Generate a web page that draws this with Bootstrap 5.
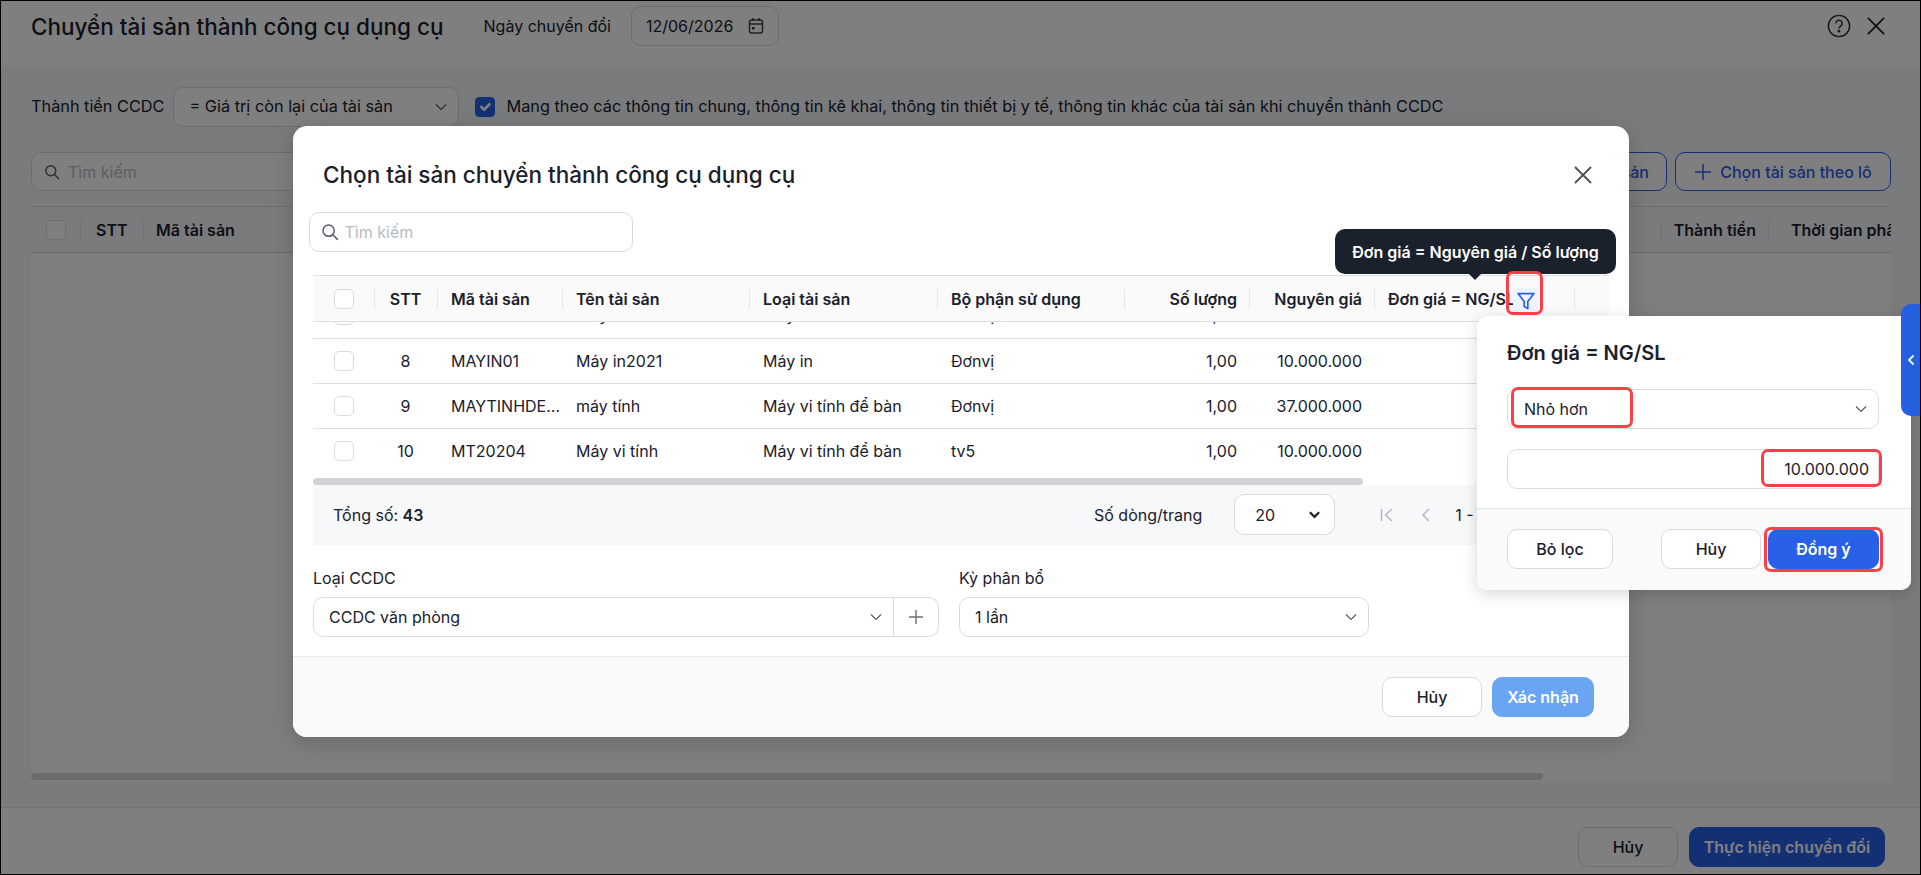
<!DOCTYPE html>
<html lang="vi">
<head>
    <meta charset="UTF-8">
    <title>Chuyển tài sản thành công cụ dụng cụ</title>
    <link href="https://cdn.jsdelivr.net/npm/bootstrap@5.3.2/dist/css/bootstrap.min.css" rel="stylesheet">
    <style>
        html, body { height: 875px; overflow: hidden; }
        body {
            font-family: Inter, "Noto Sans", sans-serif;
            font-size: 16px;
            color: #1a202c;
            background: #f5f6fa;
        }
        .shot { position: relative; width: 1921px; height: 875px; overflow: hidden; }
        .shot::after {
            content: "";
            position: absolute;
            inset: 0;
            border: 1px solid #000;
            z-index: 50;
            pointer-events: none;
        }

        /* shared controls */
        .field-box {
            height: 40px;
            background: #fff;
            border: 1px solid #d9dbde;
            border-radius: 10px;
        }
        .field-select {
            height: 40px;
            font-size: 16px;
            color: #1a202c;
            border: 1px solid #d9dbde;
            border-radius: 10px;
            padding: 0 36px 0 15px;
            background-size: 14px 14px;
            background-position: right 10px center;
            background-image: url("data:image/svg+xml,%3csvg xmlns='http://www.w3.org/2000/svg' viewBox='0 0 14 14'%3e%3cpath fill='none' stroke='%23555b66' stroke-width='1.2' d='M2 4.5l5 5 5-5'/%3e%3c/svg%3e");
        }
        .field-input {
            font-size: 16px;
            color: #1a202c;
            height: 100%;
            background: transparent;
        }
        .field-input::placeholder { color: #b7bbc2; }
        .act-btn {
            height: 40px;
            font-size: 16px;
            font-weight: 500;
            border-radius: 10px;
            padding: 0;
            color: #1a202c;
            background: #fff;
            border: 1px solid #d9dbde;
        }
        .act-primary { background: #2860e8; border-color: #2860e8; color: #fff; font-weight: 600; }
        .act-faded { background: #69a5f2; border-color: #69a5f2; color: #fff; font-weight: 600; }
        .act-outline { color: #2860e8; border-color: #2860e8; background: #fff; }
        .box-tick { width: 20px; height: 20px; margin: 0; border: 1px solid #d9dbde; border-radius: 5px; }
        .box-tick:checked { background-color: #2860e8; border-color: #2860e8; }

        /* page under the backdrop */
        .page-head { height: 66px; background: #fff; padding: 6px 36px 0 31px; }
        .page-title { font-size: 22.5px; font-weight: 500; margin: 0 40px 0 0; }
        .date-box { width: 148px; padding: 0 14px 0 14px; }
        .page-main { height: 741px; padding: 21px 30px 0 31px; }
        .carry-row { height: 39px; font-size: 16.3px; }
        .carry-row .field-select { font-size: 16.3px; padding-left: 16px; }
        .main-tools { height: 39px; margin-top: 26px; margin-bottom: 15px; }
        .back-search { width: 420px; padding-left: 12px; }
        .back-grid { height: 575px; background: #fff; border-top: 1px solid #d9dbde; }
        .back-grid-head {
            height: 46px;
            background: #f6f7fa;
            border-bottom: 1px solid #d9dbde;
            font-weight: 600;
        }
        .head-cell { padding: 0 12px 0 13px; white-space: nowrap; position: relative; }
        .head-cell::before, .grid-head th::before {
            content: "";
            position: absolute;
            left: 0;
            top: 50%;
            height: 20px;
            margin-top: -10px;
            border-left: 1px solid #e3e5e8;
        }
        .back-scroll { width: 1512px; height: 7px; margin-bottom: 1px; border-radius: 4px; background: #d6d7d9; }
        .page-foot {
            height: 68px;
            background: #fff;
            border-top: 1px solid #e5e6e8;
            padding: 19px 36px 0 0;
        }
        .backdrop { position: absolute; inset: 0; background: rgba(0, 0, 0, .5); z-index: 5; }

        /* modal */
        .asset-modal {
            position: absolute;
            left: 293px;
            top: 126px;
            width: 1336px;
            height: 611px;
            background: #fff;
            border-radius: 14px;
            z-index: 10;
            box-shadow: 0 6px 24px rgba(0, 0, 0, .18);
            overflow: hidden;
        }
        .modal-top { padding: 35px 36px 0 30px; height: 86px; }
        .modal-title-text { font-size: 22.5px; font-weight: 500; line-height: 28px; margin: 0; }
        .modal-search { width: 324px; margin-left: 15.5px; padding-left: 11px; }
        .modal-search .field-input { padding: 0 2px; }
        .grid-wrap { margin: 23px 20px 0 20px; }
        .grid-head, .grid-body { table-layout: fixed; width: 1296px; margin: 0; border-collapse: collapse; }
        .grid-head th {
            height: 46px;
            padding: 0 12px 0 14px;
            background: #fafafa;
            font-weight: 600;
            font-size: 16px;
            position: relative;
            white-space: nowrap;
            overflow: hidden;
            border-top: 1px solid #dcdfe3;
            border-bottom: 1px solid #dcdfe3;
        }
        .grid-head th:first-child::before { display: none; }
        .grid-clip { height: 151px; overflow: hidden; }
        .grid-body { margin-top: -29px; }
        .grid-body td {
            height: 45px;
            padding: 0 12px 0 14px;
            font-size: 16px;
            border-bottom: 1px solid #dcdfe3;
            white-space: nowrap;
            overflow: hidden;
            text-overflow: ellipsis;
        }
        .grid-body td.code-cell { padding-right: 0; }
        .scroll-rail { height: 12px; padding-top: 5px; }
        .scroll-thumb { width: 1050px; height: 7px; border-radius: 4px; background: #d1d3d6; }
        .pager { height: 60px; background: #f7f8fa; padding: 0 0 1px 20px; }
        .pager-right { width: 515px; }
        .pager-select {
            width: 101px;
            height: 41px;
            font-size: 16px;
            color: #1a202c;
            border: 1px solid #d9dbde;
            border-radius: 10px;
            padding: 0 30px 0 20px;
            margin: 0 44px 0 32px;
            background-position: right 13px center;
            background-size: 13px 13px;
            background-color: #fff;
            background-image: url("data:image/svg+xml,%3csvg xmlns='http://www.w3.org/2000/svg' viewBox='0 0 14 14'%3e%3cpath fill='none' stroke='%231a202c' stroke-width='2.4' d='M2 4.5l5 5 5-5'/%3e%3c/svg%3e");
        }
        .form-zone { padding: 23px 20px 0 20px; height: 111px; }
        .form-label-text { line-height: 20px; margin-bottom: 9px; }
        .type-col { width: 626px; }
        .period-col { width: 410px; margin-left: 20px; }
        .type-group { height: 40px; }
        .type-group .field-select { border-radius: 10px 0 0 10px; }
        .plus-btn {
            width: 45px;
            height: 40px;
            border: 1px solid #d9dbde;
            border-left: 0;
            border-radius: 0 10px 10px 0;
            background: #fff;
            padding: 0;
        }
        .modal-foot {
            height: 81px;
            background: #fafafa;
            border-top: 1px solid #e8e9eb;
            padding: 20px 35px 0 0;
        }

        /* tooltip */
        .tip {
            position: absolute;
            left: 1335px;
            top: 229px;
            width: 281px;
            height: 45px;
            background: #1a202c;
            color: #fff;
            border-radius: 10px;
            font-weight: 600;
            z-index: 20;
        }
        .tip::after {
            content: "";
            position: absolute;
            left: 134px;
            top: 45px;
            border: 6px solid transparent;
            border-top: 6px solid #1a202c;
            border-bottom: 0;
        }

        /* filter popup */
        .filter-pop {
            position: absolute;
            left: 1477px;
            top: 316px;
            width: 434px;
            height: 274px;
            background: #fff;
            border-radius: 10px;
            box-shadow: 0 4px 16px rgba(0, 0, 0, .16);
            overflow: hidden;
            z-index: 20;
        }
        .pop-body { height: 193px; padding: 24px 32px 0 30px; border-bottom: 1px solid #e3e4e6; }
        .pop-title { font-size: 20px; font-weight: 600; line-height: 26px; margin: 0 0 23px 0; }
        .pop-foot { height: 81px; background: #fafafa; padding: 20px 32px 0 30px; }
        .value-input { padding: 0 9px; text-align: right; }

        .side-tab {
            position: absolute;
            left: 1901px;
            top: 304px;
            width: 20px;
            height: 112px;
            background: #2560e0;
            border-radius: 10px 0 0 10px;
            z-index: 30;
        }
        .mark-box {
            position: absolute;
            border: 3px solid #ff3f48;
            border-radius: 7px;
            z-index: 40;
        }
        .mark-filter { left: 1506px; top: 271px; width: 37px; height: 44px; }
        .mark-op { left: 1511px; top: 387px; width: 122px; height: 41px; }
        .mark-val { left: 1761px; top: 449px; width: 121px; height: 38px; }
        .mark-ok { left: 1764px; top: 527px; width: 119px; height: 45px; }
        .filter-hit {
            position: absolute;
            right: 36px;
            top: 12px;
            width: 25px;
            height: 25px;
            background: #eef4ff;
            border-radius: 4px;
        }
    </style>
</head>
<body>
<div class="shot">

    <!-- trang phía sau -->
    <div class="page-head d-flex align-items-start">
        <div class="d-flex align-items-center" style="height:40px">
            <h1 class="page-title">Chuyển tài sản thành công cụ dụng cụ</h1>
            <span class="text-nowrap" style="margin-right:20px">Ngày chuyển đổi</span>
            <div class="field-box date-box d-flex align-items-center justify-content-between">
                <span>12/06/2026</span>
                <svg width="16" height="18" viewBox="0 0 16 18" fill="none" stroke="#3b414c" stroke-width="1.5"><rect x="1.5" y="3" width="13" height="13" rx="2"/><path d="M1.5 7h13M5 1v3M11 1v3"/><rect x="4" y="10" width="2.5" height="2.5" fill="#3b414c" stroke="none"/></svg>
            </div>
        </div>
        <div class="ms-auto d-flex align-items-center gap-3" style="height:40px">
            <svg width="24" height="24" viewBox="0 0 26 26" fill="none" stroke="#2b2f36" stroke-width="1.6"><circle cx="13" cy="13" r="11.5"/><path d="M9.6 10.2a3.4 3.4 0 1 1 5.2 2.9c-1.2.8-1.8 1.4-1.8 2.7"/><circle cx="13" cy="18.6" r=".7" fill="#2b2f36"/></svg>
            <svg width="18" height="18" viewBox="0 0 20 20" fill="none" stroke="#1a202c" stroke-width="1.9"><path d="M1 1l18 18M19 1L1 19"/></svg>
        </div>
    </div>

    <div class="page-main">
        <div class="carry-row d-flex align-items-center">
            <span class="text-nowrap me-2">Thành tiền CCDC</span>
            <select class="form-select field-select" style="width:286px"><option>= Giá trị còn lại của tài sản</option></select>
            <input class="form-check-input box-tick ms-3 me-2" type="checkbox" checked>
            <span class="ms-1 text-nowrap">Mang theo các thông tin chung, thông tin kê khai, thông tin thiết bị y tế, thông tin khác của tài sản khi chuyển thành CCDC</span>
        </div>
        <div class="main-tools d-flex align-items-center">
            <div class="field-box back-search d-flex align-items-center gap-2" style="height:39px">
                <svg width="16" height="16" viewBox="0 0 16 16" fill="none" stroke="#555b66" stroke-width="1.4"><circle cx="6.8" cy="6.8" r="5"/><path d="M10.5 10.5L15 15"/></svg>
                <span style="color:#b7bbc2">Tìm kiếm</span>
            </div>
            <button class="btn act-btn act-outline ms-auto me-2 text-end" style="height:39px;width:200px;padding-right:17px">Chọn tài sản</button>
            <button class="btn act-btn act-outline d-flex align-items-center justify-content-center gap-2" style="height:39px;width:216px">
                <svg width="18" height="18" viewBox="0 0 18 18" stroke="#2860e8" stroke-width="1.5"><path d="M9 1v16M1 9h16"/></svg>
                Chọn tài sản theo lô
            </button>
        </div>
        <div class="back-grid d-flex flex-column">
            <div class="back-grid-head d-flex align-items-center">
                <div style="width:49px;padding-left:15px"><span class="d-block box-tick" style="background:#fff"></span></div>
                <div class="head-cell" style="width:63px;padding-left:16px">STT</div>
                <div class="head-cell">Mã tài sản</div>
                <div class="flex-grow-1"></div>
                <div class="head-cell border-0" style="padding-right:12px">Thành tiền</div>
                <div class="head-cell overflow-hidden" style="width:123px;padding-left:23px;padding-right:0">Thời gian phân bổ</div>
            </div>
            <div class="flex-grow-1"></div>
            <div class="back-scroll"></div>
        </div>
    </div>

    <div class="page-foot d-flex justify-content-end gap-2">
        <button class="btn act-btn" style="width:100px;margin-right:3px">Hủy</button>
        <button class="btn act-btn act-primary" style="width:196px">Thực hiện chuyển đổi</button>
    </div>

    <div class="backdrop"></div>

    <!-- hộp thoại chọn tài sản -->
    <div class="asset-modal">
        <div class="modal-top d-flex justify-content-between align-items-start">
            <h2 class="modal-title-text">Chọn tài sản chuyển thành công cụ dụng cụ</h2>
            <svg class="mt-1" width="20" height="20" viewBox="0 0 20 20" fill="none" stroke="#4a4f59" stroke-width="1.8"><path d="M2 2l16 16M18 2L2 18"/></svg>
        </div>
        <div class="field-box modal-search d-flex align-items-center gap-1">
            <svg width="18" height="18" viewBox="0 0 16 16" fill="none" stroke="#555b66" stroke-width="1.3"><circle cx="6.8" cy="6.8" r="5"/><path d="M10.5 10.5L15 15"/></svg>
            <input class="border-0 field-input flex-grow-1" style="outline:none" placeholder="Tìm kiếm">
        </div>

        <div class="grid-wrap">
            <table class="grid-head">
                <colgroup>
                    <col style="width:61px"><col style="width:63px"><col style="width:125px"><col style="width:187px"><col style="width:188px"><col style="width:187px"><col style="width:125px"><col style="width:125px"><col style="width:200px"><col style="width:35px">
                </colgroup>
                <thead>
                <tr>
                    <th style="padding-left:21px"><span class="d-block box-tick" style="background:#fff"></span></th>
                    <th class="text-center" style="padding:0">STT</th>
                    <th>Mã tài sản</th>
                    <th>Tên tài sản</th>
                    <th>Loại tài sản</th>
                    <th>Bộ phận sử dụng</th>
                    <th class="text-end">Số lượng</th>
                    <th class="text-end">Nguyên giá</th>
                    <th style="padding-right:61px">Đơn giá = NG/SL<span class="filter-hit d-flex align-items-center justify-content-center"><svg width="18" height="18" viewBox="0 0 17 17" fill="none" stroke="#2860e8" stroke-width="1.6" stroke-linejoin="round"><path d="M1 1.5h15L10.2 9v6.5L6.8 13.6V9z"/></svg></span></th>
                    <th></th>
                </tr>
                </thead>
            </table>
            <div class="grid-clip">
                <table class="grid-body">
                    <colgroup>
                        <col style="width:61px"><col style="width:63px"><col style="width:125px"><col style="width:187px"><col style="width:188px"><col style="width:187px"><col style="width:125px"><col style="width:125px"><col style="width:200px"><col style="width:35px">
                    </colgroup>
                    <tbody id="assetRows"></tbody>
                </table>
            </div>
            <div class="scroll-rail"><div class="scroll-thumb"></div></div>
            <div class="pager d-flex align-items-center justify-content-between">
                <span>Tổng số: <b class="fw-semibold">43</b></span>
                <div class="pager-right d-flex align-items-center">
                    <span class="text-nowrap">Số dòng/trang</span>
                    <select class="form-select pager-select"><option>20</option></select>
                    <svg width="16" height="16" viewBox="0 0 16 16" fill="none" stroke="#b4b8bf" stroke-width="1.5"><path d="M2.5 2v12M13 2L6.5 8l6.5 6"/></svg>
                    <svg style="margin-left:23px;margin-right:21px" width="16" height="16" viewBox="0 0 16 16" fill="none" stroke="#b4b8bf" stroke-width="1.5"><path d="M11 2L5 8l6 6"/></svg>
                    <span class="text-nowrap">1 - 20</span>
                </div>
            </div>
        </div>

        <div class="form-zone d-flex">
            <div class="type-col">
                <div class="form-label-text">Loại CCDC</div>
                <div class="type-group d-flex">
                    <select class="form-select field-select flex-grow-1" style="width:auto"><option>CCDC văn phòng</option></select>
                    <button class="plus-btn d-flex align-items-center justify-content-center">
                        <svg width="14" height="14" viewBox="0 0 14 14" stroke="#6b7079" stroke-width="1.4"><path d="M7 0v14M0 7h14"/></svg>
                    </button>
                </div>
            </div>
            <div class="period-col">
                <div class="form-label-text">Kỳ phân bổ</div>
                <select class="form-select field-select"><option>1 lần</option></select>
            </div>
        </div>

        <div class="modal-foot d-flex justify-content-end">
            <button class="btn act-btn" style="width:100px;margin-right:10px">Hủy</button>
            <button class="btn act-btn act-faded" style="width:102px">Xác nhận</button>
        </div>
    </div>

    <div class="tip d-flex align-items-center justify-content-center">Đơn giá = Nguyên giá / Số lượng</div>

    <!-- popup lọc cột đơn giá -->
    <div class="filter-pop">
        <div class="pop-body">
            <h3 class="pop-title">Đơn giá = NG/SL</h3>
            <select class="form-select field-select" style="margin-bottom:20px;padding-left:16px"><option>Nhỏ hơn</option></select>
            <div class="field-box">
                <input class="border-0 field-input w-100 value-input" style="outline:none" value="10.000.000">
            </div>
        </div>
        <div class="pop-foot d-flex">
            <button class="btn act-btn" style="width:106px">Bỏ lọc</button>
            <button class="btn act-btn ms-auto" style="width:100px;margin-right:7px">Hủy</button>
            <button class="btn act-btn act-primary" style="width:111px">Đồng ý</button>
        </div>
    </div>

    <div class="side-tab d-flex align-items-center justify-content-center">
        <svg width="10" height="12" viewBox="0 0 10 12" fill="none" stroke="#fff" stroke-width="1.8"><path d="M7.5 1.5L3 6l4.5 4.5"/></svg>
    </div>

    <div class="mark-box mark-filter"></div>
    <div class="mark-box mark-op"></div>
    <div class="mark-box mark-val"></div>
    <div class="mark-box mark-ok"></div>
</div>

<script src="https://cdn.jsdelivr.net/npm/bootstrap@5.3.2/dist/js/bootstrap.bundle.min.js"></script>
<script>
const rows = [
    ['7', 'MAYIN02', 'Máy in', 'Máy in', 'Đơnvị', '1,00', '5.000.000'],
    ['8', 'MAYIN01', 'Máy in2021', 'Máy in', 'Đơnvị', '1,00', '10.000.000'],
    ['9', 'MAYTINHDEBAN01', 'máy tính', 'Máy vi tính để bàn', 'Đơnvị', '1,00', '37.000.000'],
    ['10', 'MT20204', 'Máy vi tính', 'Máy vi tính để bàn', 'tv5', '1,00', '10.000.000']
];
document.getElementById('assetRows').innerHTML = rows.map(r => `<tr>
    <td style="padding-left:21px"><span class="d-block box-tick"></span></td>
    <td class="text-center" style="padding:0">${r[0]}</td>
    <td class="code-cell">${r[1]}</td>
    <td>${r[2]}</td>
    <td>${r[3]}</td>
    <td>${r[4]}</td>
    <td class="text-end">${r[5]}</td>
    <td class="text-end">${r[6]}</td>
    <td></td><td></td>
</tr>`).join('');
</script>
</body>
</html>
